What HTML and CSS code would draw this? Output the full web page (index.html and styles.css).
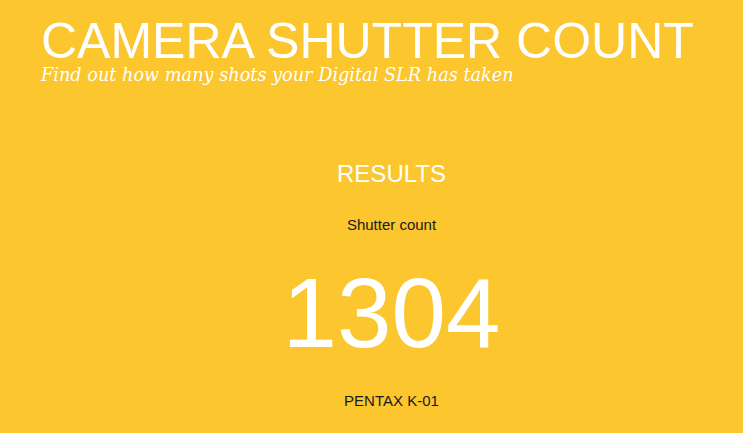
FILE: index.html
```html
<!DOCTYPE html>
<html>
<head>
<meta charset="utf-8">
<link rel="stylesheet" href="styles.css">
</head>
<body>
<header class="header">
  <h1 class="title">CAMERA SHUTTER COUNT</h1>
  <p class="tagline">Find out how many shots your Digital SLR has taken</p>
</header>
<main class="results">
  <h2 class="results-title">RESULTS</h2>
  <p class="label">Shutter count</p>
  <p class="count">1304</p>
  <p class="model">PENTAX K-01</p>
</main>
</body>
</html>
```
FILE: styles.css
```css
html, body {
  margin: 0;
  padding: 0;
  background: #fbc62e;
  height: 100%;
  overflow: hidden;
}
body {
  font-family: "Liberation Sans", Arial, sans-serif;
  color: #1a1a1a;
}
.header {
  padding: 17px 0 0 41px;
}
.title {
  margin: 0;
  font-weight: normal;
  font-size: 50px;
  line-height: 48px;
  color: #fff;
  white-space: nowrap;
}
.tagline {
  margin: 0;
  font-family: "DejaVu Serif", Georgia, serif;
  font-style: italic;
  font-size: 17.7px;
  line-height: 20px;
  color: #fff;
  white-space: nowrap;
}
.results {
  margin-left: 40px;
  display: flex;
  flex-direction: column;
  align-items: center;
  padding-top: 75px;
}
.results-title {
  margin: 0;
  font-weight: normal;
  font-size: 24px;
  line-height: 28px;
  color: #fff;
}
.label {
  margin: 28px 0 0;
  font-size: 15px;
  line-height: 17px;
}
.count {
  margin: 31px 0 0;
  font-size: 98px;
  line-height: 98px;
  color: #fff;
}
.model {
  margin: 30px 0 0;
  font-size: 15px;
  line-height: 17px;
}
```
